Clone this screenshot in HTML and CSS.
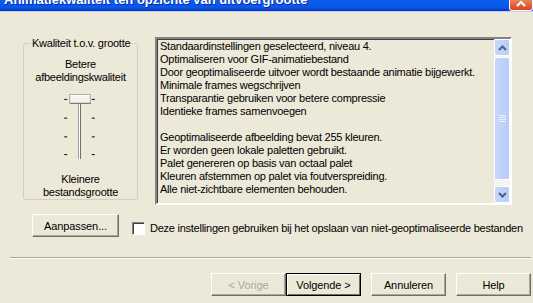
FILE: index.html
```html
<!DOCTYPE html>
<html lang="nl">

<head>
    <meta charset="UTF-8">
    <title>Animatiekwaliteit</title>
    <link rel="stylesheet" href="styles.css">
</head>

<body>
    <div class="titlebar">
        <span class="title">Animatiekwaliteit ten opzichte van uitvoergrootte</span>
        <div class="close">
            <svg width="22" height="10" viewBox="0 0 22 10">
                <path d="M7 6 L11 2 L15 6" stroke="#fff" stroke-width="2" fill="none"/>
            </svg>
        </div>
    </div>

    <div class="main">
        <fieldset class="group">
            <legend>Kwaliteit t.o.v. grootte</legend>
            <div class="caption">Betere<br>afbeeldingskwaliteit</div>
            <svg class="slider" width="40" height="70" viewBox="0 0 40 70">
                <g fill="#000">
                    <rect x="5" y="7" width="3" height="1"/>
                    <rect x="5" y="26" width="3" height="1"/>
                    <rect x="5" y="45" width="3" height="1"/>
                    <rect x="5" y="63" width="3" height="1"/>
                    <rect x="33" y="7" width="3" height="1"/>
                    <rect x="33" y="26" width="3" height="1"/>
                    <rect x="33" y="45" width="3" height="1"/>
                    <rect x="33" y="63" width="3" height="1"/>
                </g>
                <rect x="19" y="8" width="1" height="60" fill="#9d9da1"/>
                <rect x="20" y="8" width="1" height="60" fill="#fff"/>
                <rect x="21" y="8" width="1" height="60" fill="#716f64"/>
                <rect x="10.5" y="2.5" width="21" height="9" fill="#f3f2ec" stroke="#aca899"/>
                <rect x="11" y="3" width="20" height="1" fill="#fff"/>
                <rect x="11" y="11" width="21" height="1" fill="#716f64"/>
            </svg>
            <div class="caption">Kleinere<br>bestandsgrootte</div>
        </fieldset>

        <div class="list">
            <div class="lines">
                <div>Standaardinstellingen geselecteerd, niveau 4.</div>
                <div>Optimaliseren voor GIF-animatiebestand</div>
                <div>Door geoptimaliseerde uitvoer wordt bestaande animatie bijgewerkt.</div>
                <div>Minimale frames wegschrijven</div>
                <div>Transparantie gebruiken voor betere compressie</div>
                <div>Identieke frames samenvoegen</div>
                <div>&nbsp;</div>
                <div>Geoptimaliseerde afbeelding bevat 255 kleuren.</div>
                <div>Er worden geen lokale paletten gebruikt.</div>
                <div>Palet genereren op basis van octaal palet</div>
                <div>Kleuren afstemmen op palet via foutverspreiding.</div>
                <div>Alle niet-zichtbare elementen behouden.</div>
            </div>
            <div class="scrollbar">
                <div class="arrow">
                    <svg width="9" height="6" viewBox="0 0 9 6"><path d="M1 5 L4.5 1.5 L8 5" stroke="#4d6185" stroke-width="2" fill="none"/></svg>
                </div>
                <div class="thumb"><span></span><span></span><span></span><span></span></div>
                <div class="track"></div>
                <div class="arrow">
                    <svg width="9" height="6" viewBox="0 0 9 6"><path d="M1 1 L4.5 4.5 L8 1" stroke="#4d6185" stroke-width="2" fill="none"/></svg>
                </div>
            </div>
        </div>
    </div>

    <div class="options">
        <button class="btn wide">Aanpassen...</button>
        <label class="check"><span class="box"></span>Deze instellingen gebruiken bij het opslaan van niet-geoptimaliseerde bestanden</label>
    </div>

    <div class="separator"></div>

    <div class="buttons">
        <button class="btn disabled">&lt; Vorige</button>
        <button class="btn default">Volgende &gt;</button>
        <button class="btn gap">Annuleren</button>
        <button class="btn gap">Help</button>
    </div>
</body>

</html>
```

FILE: styles.css
```css
body {
    margin: 0;
    background-color: #ece9d8;
    font-family: 'Liberation Sans', Arial, sans-serif;
    font-size: 11px;
    letter-spacing: -0.25px;
    white-space: nowrap;
    color: #000;
    overflow: hidden;
}

.titlebar {
    display: flex;
    justify-content: space-between;
    height: 11px;
    background: linear-gradient(#0b5ef0, #0a56e6 70%, #0331c8);
    border-bottom: 1px solid #c6d3ef;
    overflow: hidden;
}

.title {
    color: #fff;
    font-weight: bold;
    font-size: 13px;
    letter-spacing: 0;
    line-height: 13px;
    margin-top: -7px;
    margin-left: 4px;
    text-shadow: 1px 1px #0a2a9a;
}

.close {
    width: 22px;
    height: 10px;
    background: linear-gradient(#e9835c, #d8461f);
    border: 1px solid #fff;
    border-top: none;
    border-radius: 0 0 3px 3px;
}

.close svg {
    display: block;
}

.main {
    display: flex;
    align-items: flex-start;
    gap: 17px;
    padding: 25px 0 0 23px;
}

.group {
    margin: 0;
    padding: 0;
    width: 113px;
    height: 161px;
    border: 1px solid #d0d0bf;
    border-radius: 3px;
    display: flex;
    flex-direction: column;
    align-items: center;
}

.group legend {
    margin-left: 7px;
    padding: 0 1px;
    line-height: 13px;
}

.caption {
    text-align: center;
    line-height: 13px;
    margin-top: 8px;
}

.slider {
    display: block;
    margin: 8px 0 3px -3px;
}

.caption:last-child {
    margin-top: 9px;
}

.list {
    display: flex;
    width: 353px;
    height: 164px;
    background-color: #ece9d8;
    border: 2px solid;
    border-color: #848284 #fff #fff #848284;
    box-shadow: inset 1px 1px #404040;
}

.lines {
    flex: 1;
    padding: 1px 0 0 3px;
    line-height: 13px;
    overflow: hidden;
}

.scrollbar {
    width: 16px;
    display: flex;
    flex-direction: column;
    background-color: #f4f4f0;
}

.arrow {
    height: 15px;
    background: linear-gradient(90deg, #c8d8fc, #b9cdf9);
    border: 1px solid #fff;
    border-radius: 2px;
    display: flex;
    align-items: center;
    justify-content: center;
}

.thumb {
    height: 121px;
    margin-top: 1px;
    background: linear-gradient(90deg, #c9d8fc, #b8ccf8);
    border: 1px solid #fff;
    border-radius: 2px;
    display: flex;
    flex-direction: column;
    justify-content: center;
    align-items: center;
    gap: 1px;
}

.thumb span {
    width: 7px;
    height: 1px;
    background-color: #eef3fe;
}

.track {
    flex: 1;
}

.options {
    display: flex;
    align-items: flex-start;
    padding: 9px 0 0 32px;
    gap: 13px;
}

.btn {
    font-family: 'Liberation Sans', Arial, sans-serif;
    font-size: 11px;
    letter-spacing: -0.1px;
    width: 75px;
    height: 23px;
    padding: 0;
    background-color: #ece9d8;
    border: 1px solid;
    border-color: #fff #716f64 #716f64 #fff;
    box-shadow: inset -1px -1px #aca899;
    color: #000;
}

.btn.wide {
    width: 87px;
}

.btn.disabled {
    color: #aca899;
}

.btn.default {
    border: 1px solid #000;
    box-shadow: inset 1px 1px #fff, inset -1px -1px #716f64;
}

.btn.gap {
    margin-left: 10px;
}

.check {
    display: flex;
    align-items: center;
    gap: 5px;
    margin-top: 8px;
    line-height: 13px;
}

.box {
    width: 11px;
    height: 11px;
    background-color: #fff;
    border: 1px solid;
    border-color: #848284 #fff #fff #848284;
    box-shadow: inset 1px 1px #404040;
}

.separator {
    margin: 20px 2px 0 10px;
    border-top: 1px solid #aca899;
    border-bottom: 1px solid #fff;
}

.buttons {
    display: flex;
    justify-content: flex-end;
    padding: 14px 2px 0 0;
}
```
